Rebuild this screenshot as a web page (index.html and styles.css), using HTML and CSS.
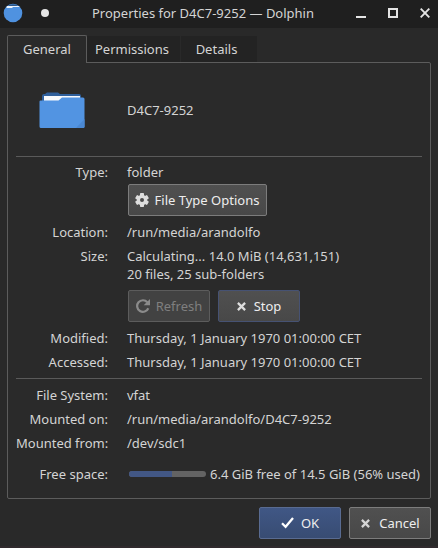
FILE: index.html
```html
<!DOCTYPE html>
<html lang="en">
<head>
<meta charset="utf-8">
<title>Properties for D4C7-9252 — Dolphin</title>
<link rel="stylesheet" href="styles.css">
</head>
<body>
<div class="window">
  <header class="titlebar">
    <svg class="app-icon" width="20" height="20" viewBox="0 0 20 20"><circle cx="10" cy="10" r="9.3" fill="#4f92e0"/><path d="M3.5 3.8 Q10 -1.2 16.5 3.8z" fill="#2b5687"/><path d="M4 3 H15.6 L16.6 4 H10 L9 5 H3.4z" fill="#eef4fb"/></svg>
    <span class="pin"></span>
    <h1 class="title">Properties for D4C7-9252 — Dolphin</h1>
    <div class="controls">
      <svg width="10" height="10" viewBox="0 0 10 10"><path d="M0 9H10" stroke="#e4e4e4" stroke-width="2"/></svg>
      <svg width="10" height="10" viewBox="0 0 10 10"><path d="M1 1H9V9H1z" fill="none" stroke="#e4e4e4" stroke-width="2"/></svg>
      <svg width="10" height="10" viewBox="0 0 10 10"><path d="M.7 .7L9.3 9.3M9.3 .7L.7 9.3" stroke="#e4e4e4" stroke-width="1.9"/></svg>
    </div>
  </header>
  <nav class="tabs">
    <div class="tab active">General</div>
    <div class="tab permissions">Permissions</div>
    <div class="tab details">Details</div>
  </nav>
  <main class="panel">
    <section class="identity">
      <svg class="folder" width="46" height="38" viewBox="0 0 46 38"><path d="M3 10V4Q3 2 5 2H6L8 .5H19L21 2H40Q42 2 42 4V10z" fill="#2f5f9b"/><path d="M5 4H41V12H5z" fill="#f7f9fc"/><path d="M.5 9.5Q.5 8.5 1.5 8.5H19.5L23 5.5H44Q45.5 5.5 45.5 7V34.5Q45.5 36 44 36H2Q.5 36 .5 34.5z" fill="#5294e2"/><path d="M45.5 27V34.5Q45.5 36 44 36H37z" fill="#4a88d3"/></svg>
      <span>D4C7-9252</span>
    </section>
    <dl class="fields">
      <dt>Type:</dt>
      <dd>folder
        <button class="button file-type"><svg width="14" height="14" viewBox="-7 -7 14 14"><g fill="#dedede"><circle r="5.3"/><rect x="-2" y="-6.9" width="4" height="13.8" rx=".7"/><rect x="-2" y="-6.9" width="4" height="13.8" rx=".7" transform="rotate(60)"/><rect x="-2" y="-6.9" width="4" height="13.8" rx=".7" transform="rotate(120)"/></g><circle r="2" fill="#4b4b4b"/></svg>File Type Options</button>
      </dd>
      <dt>Location:</dt><dd>/run/media/arandolfo</dd>
      <dt>Size:</dt>
      <dd>Calculating... 14.0 MiB (14,631,151)<br>20 files, 25 sub-folders
        <div class="actions">
          <button class="button refresh" disabled><svg width="14" height="14" viewBox="0 0 14 14"><path d="M11.3 3.2A5.8 5.8 0 1 0 12.3 9.3" fill="none" stroke="#8b8b8b" stroke-width="2.2"/><path d="M14 0V6.3H7.7z" fill="#8b8b8b"/></svg>Refresh</button>
          <button class="button stop"><svg width="9" height="9" viewBox="0 0 8 8"><path d="M.8 .8L7.2 7.2M7.2 .8L.8 7.2" stroke="#dedede" stroke-width="2"/></svg>Stop</button>
        </div>
      </dd>
      <dt>Modified:</dt><dd>Thursday, 1 January 1970 01:00:00 CET</dd>
      <dt>Accessed:</dt><dd>Thursday, 1 January 1970 01:00:00 CET</dd>
    </dl>
    <dl class="fields volume">
      <dt>File System:</dt><dd>vfat</dd>
      <dt>Mounted on:</dt><dd>/run/media/arandolfo/D4C7-9252</dd>
      <dt>Mounted from:</dt><dd>/dev/sdc1</dd>
      <dt class="space">Free space:</dt>
      <dd class="space usage"><span class="meter"><span class="used" style="width:56%"></span></span>6.4 GiB free of 14.5 GiB (56% used)</dd>
    </dl>
  </main>
  <footer class="footer">
    <button class="button ok"><svg width="13" height="12" viewBox="0 0 13 12"><path d="M1 6.2L4.6 9.7L12 1" fill="none" stroke="#fff" stroke-width="2.3"/></svg>OK</button>
    <button class="button cancel"><svg width="9" height="9" viewBox="0 0 8 8"><path d="M.8 .8L7.2 7.2M7.2 .8L.8 7.2" stroke="#d4d4d4" stroke-width="2"/></svg>Cancel</button>
  </footer>
</div>
</body>
</html>
```
FILE: styles.css
```css
* { box-sizing: border-box; }
body {
  margin: 0;
  background: #292929;
  color: #d4d4d4;
  font: 13px/18px "Noto Sans", sans-serif;
}
.window { height: 548px; overflow: hidden; border-bottom: 2px solid #302a2d; }
svg { flex: none; }

.titlebar {
  display: flex;
  align-items: center;
  height: 28px;
  padding: 0 8px 2px 3px;
  background: #1f1f1f;
}
.pin { width: 8px; height: 8px; margin-left: 18px; border-radius: 50%; background: #e6e6e6; }
.title { margin: 0 0 0 43px; font-size: 13px; font-weight: 400; white-space: nowrap; }
.controls { display: flex; gap: 22px; margin-left: auto; }

.tabs { display: flex; align-items: flex-end; height: 35px; padding-left: 7px; }
.tab {
  display: flex;
  align-items: center;
  justify-content: center;
  height: 26px;
  margin-bottom: 1px;
  background: #232323;
}
.tab.active {
  position: relative;
  width: 80px;
  height: 28px;
  margin-bottom: 0;
  padding-bottom: 2px;
  background: #2a2a2a;
  border: 1px solid #5c5c5c;
  border-bottom: 0;
  border-radius: 2px 2px 0 0;
}
.permissions { width: 93px; padding-right: 3px; }
.details { width: 77px; padding-right: 5px; border-left: 1px solid #292929; }

.panel {
  height: 437px;
  margin: -1px 7px 0;
  padding: 0 8px;
  background: #2a2a2a;
  border: 1px solid #5c5c5c;
  border-radius: 0 2px 2px 2px;
}
.identity { display: flex; align-items: center; height: 94px; border-bottom: 1px solid #5a5a5a; }
.folder { margin: 2px 42px 0 23px; }

.fields {
  display: grid;
  grid-template-columns: 92px 1fr;
  column-gap: 19px;
  row-gap: 6px;
  margin: 0;
  padding: 6px 0 7px;
  white-space: nowrap;
}
.fields dt { text-align: right; }
.fields dd { margin: 0; }
.volume { padding-top: 7px; border-top: 1px solid #5a5a5a; }
.space { margin-top: 7px !important; }

.button {
  display: flex;
  align-items: center;
  justify-content: center;
  height: 32px;
  padding: 0;
  color: #eee;
  font: inherit;
  background: linear-gradient(#505050, #484848);
  border: 1px solid #7c7c7c;
  border-radius: 2px;
}
.file-type { width: 139px; gap: 6px; margin: 3px 0 1px 1px; padding-right: 1px; }
.actions { display: flex; gap: 8px; margin: 7px 0 1px 1px; }
.refresh, .stop, .ok, .cancel { width: 82px; }
.refresh { gap: 6px; color: #7f7f7f; background: #424242; border-color: #5c5c5c; }
.stop { gap: 8px; border-color: #465273; }
.usage { display: flex; align-items: center; }
.meter { width: 77px; height: 6px; margin: 0 4px 1px 2px; overflow: hidden; border-radius: 3px; background: #636363; }
.used { display: block; height: 100%; background: #425785; }

.footer { display: flex; justify-content: flex-end; gap: 8px; padding: 8px 7px 0; }
.ok { gap: 7px; background: linear-gradient(#405785, #384c73); border-color: #596b91; }
.cancel { gap: 9px; padding-left: 1px; }
```
